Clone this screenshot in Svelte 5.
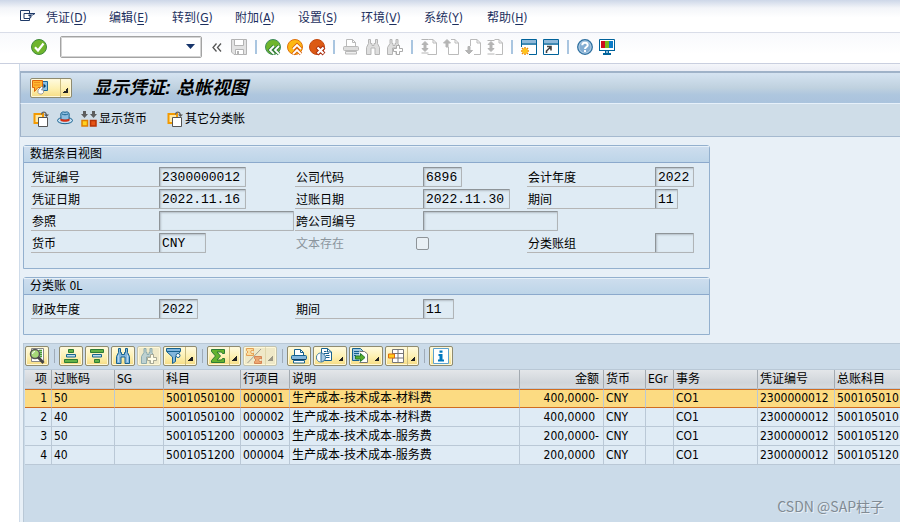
<script>
  const icons = {
    menu: '<path d="M9.5 3V.5H.5v10h9V9M4 3.5h11l-2.500 1.500H8.500M4 3.500v5h6l1-1.500M8.500 5.500h2.500v1.500H9" fill="none" stroke="#1f3a68"/>',
    ok: '<circle cx="8" cy="8" r="7.500" fill="#6fb52c" stroke="#3f8a3c"/><path d="M4 8.200l3 3.300L12.500 4.500" fill="none" stroke="#fff" stroke-width="2.200"/>',
    save: '<path d="M.5.5h15v15H3L.5 13z" fill="#e2e2e2" stroke="#b3b3b3"/><path d="M3.500.5h9v6h-9zM4.500 10.500h8v5h-8z" fill="#fff" stroke="#b3b3b3"/><path d="M6 12h2v3H6z" fill="#b3b3b3"/>',
    back: '<circle cx="8" cy="8" r="7.500" fill="#6fb52c" stroke="#3f8a5c"/><path d="M9 7L5 11l4 4M14 7l-4 4 4 4" fill="none" stroke="#2f7a3a" stroke-width="3.400"/><path d="M9 7L5 11l4 4M14 7l-4 4 4 4" fill="none" stroke="#fff" stroke-width="1.800"/>',
    exit: '<circle cx="8" cy="8" r="7.500" fill="#fdb813" stroke="#e0700c"/><path d="M6 10l4-4 4 4M6 15l4-4 4 4" fill="none" stroke="#d9600a" stroke-width="3.400"/><path d="M6 10l4-4 4 4M6 15l4-4 4 4" fill="none" stroke="#fff" stroke-width="1.800"/>',
    cancel: '<circle cx="8" cy="8" r="7.500" fill="#dc5a14" stroke="#c4480e"/><path d="M8 8l7 7m0-7l-7 7" stroke="#a92c10" stroke-width="4"/><path d="M8.500 8.500l6 6m0-6l-6 6" stroke="#fff" stroke-width="2.200"/>',
    printOff: '<path d="M3.500 7V.5h6l3 3V7" fill="#fff" stroke="#b9b9b9"/><path d="M9.500.5v3h3" fill="none" stroke="#b9b9b9"/><rect x=".5" y="7.500" width="15" height="4" rx="1" fill="#ddd" stroke="#b9b9b9"/><path d="M2.500 12.500h11v2.500h-11z" fill="#eee" stroke="#b9b9b9"/>',
    findOff: '<path d="M3.500.5h2v4H7v2h2v-2h1.500v-4h2v4l2 4v7H10V9H6v6.500H1.500v-7l2-4z" fill="#dedede" stroke="#b5b5b5"/>',
    nextOff: '<path d="M3 .5h2v4h1v2h2v-2h1v-4h2v4l1.500 3v8H9V9H5.500v6.500H.5v-7l2.500-4z" fill="#dedede" stroke="#b5b5b5"/><path d="M9.500 6.500h3v3h3v3h-3v3h-3v-3h-3v-3h3z" fill="#fff" stroke="#aaa"/>',
    pageFirst: '<path d="M7.500.5H12L15.500 4v11.500h-9M12 .5V4h3.500" fill="#fff" stroke="#bbb"/><path d="M.5.5h7M4 2.500L1 5.500h2v4H1l3 3 3-3H5v-4h2zM.5 14h7" fill="#b4b4b4" stroke="#b4b4b4"/>',
    pageUp: '<path d="M5.500 8v7.500h10V4L12 .5H8M12 .5V4h3.500" fill="#fff" stroke="#bbb"/><path d="M4 .5L.5 4H3v4h2V4h2.500z" fill="#b4b4b4" stroke="#b4b4b4"/>',
    pageDown: '<path d="M5.500 7V.5H12L15.500 4v11.500H9M12 .5V4h3.500" fill="#fff" stroke="#bbb"/><path d="M4 15L.5 11.500H3v-4h2v4h2.500z" fill="#b4b4b4" stroke="#b4b4b4"/>',
    pageLast: '<path d="M7.500.5H12L15.500 4v11.500h-7M12 .5V4h3.500" fill="#fff" stroke="#bbb"/><path d="M.5 1.500h7M4 2.500L1 5.500h2v4H1l3 3 3-3H5v-4h2zM.5 15h7" fill="#b4b4b4" stroke="#b4b4b4"/>',
    session: '<path d="M.5.500h15v15H.5z" fill="#fff" stroke="#00629a"/><path d="M1 1h14v3H1z" fill="#8fb9da"/><path d="M.5 5h15" stroke="#00629a" stroke-width="1.500"/><path d="M0 8h8v8H0z" fill="#fff"/><path d="M4 8v8M0 12h8M1 9l6 6m0-6l-6 6" stroke="#f08a00" stroke-width="1.500"/><circle cx="4" cy="12" r="2.500" fill="#ffc61a"/>',
    shortcut: '<path d="M.5.500h15v15H.5z" fill="#fff" stroke="#00629a"/><path d="M1 1h14v3H1z" fill="#8fb9da"/><path d="M.5 5h15" stroke="#00629a" stroke-width="1.500"/><path d="M3.500 14v-2l4-4M4 7.500h4v4" fill="none" stroke="#444" stroke-width="1.600"/>',
    help: '<circle cx="8" cy="8" r="7.300" fill="#83add2" stroke="#2f709f" stroke-width="1.300"/><circle cx="8" cy="8" r="6" fill="none" stroke="#b9d3e8" stroke-width=".8"/><path d="M5.300 6.200c0-3.300 5.400-3.300 5.400 0C10.700 8 8 8 8 10" fill="none" stroke="#fff" stroke-width="2"/><path d="M7 11h2v2H7z" fill="#fff"/>',
    monitor: '<path d="M.5.500h15v11H.5z" fill="#fff" stroke="#00629a"/><path d="M2 2h4v7H2z" fill="#cf0a1c"/><path d="M6 2h4v7H6z" fill="#79b61d"/><path d="M10 2h4v7h-4z" fill="#0b7bc8"/><path d="M0 11.500h16" stroke="#00629a"/><path d="M6 12h4v2h2v2H4v-2h2z" fill="#00629a"/><path d="M7 12h2v2H7z" fill="#8fb9da"/>',
    services: '<path d="M8.500 1.500h7v9h-7z" fill="#8fc2e6" stroke="#1c6a9c"/><path d="M11.500 3.500v5L14 6z" fill="#063d60"/><path d="M.5.500h10v7H6L2.500 11.500v-4h-2z" fill="#ffb62e" stroke="#dc650c"/><path d="M2.500 2.500h6M2.500 5h6" stroke="#dc650c" stroke-width="1.200" stroke-dasharray="1 1"/><path d="M6 12.500V10L9.500 6.500l1.500 1-1.500 2.500h2v2.500L10 14H7.500z" fill="#fff" stroke="#888" stroke-width=".8"/>',
    copy: '<path d="M1.500 3h8.500v9H1.500z" fill="#ffe9a6" stroke="#f39a00" stroke-width="2"/><path d="M5.500 6.500h9v9h-9z" fill="#fff" stroke="#555"/><path d="M8.500 3.500C9 .5 12.500 0 13.500 4" fill="none" stroke="#666" stroke-width="1.400"/><path d="M11 3.500h5L13.500 6z" fill="#555"/>',
    hat: '<ellipse cx="8" cy="9.500" rx="7.500" ry="3.200" fill="#c4def1" stroke="#17628f"/><path d="M4 8.500L3.800 3C4 .8 6.500.5 8 1.300c1.500-.8 4-.5 4.200 1.700L12 8.500c-2 1-6 1-8 0z" fill="#8dbde0" stroke="#17628f"/><path d="M5 3c2 1 4 1 6 0" fill="none" stroke="#17628f"/><path d="M3.500 7.500c2 1.300 7 1.300 9 0v2.200c-2 1.400-7 1.400-9 0z" fill="#d62e12"/>',
    currency: '<path d="M2 0h3v3h2L3.500 7 0 3h2zM11 0h3v3h2l-3.500 4L9 3h2z" fill="#5d5d5d"/><path d="M1 9.500h5.500v5.500H1z" fill="#ffd21f" stroke="#e08000" stroke-width="1.500"/><path d="M9.500 9.500H15v5.500H9.500z" fill="#e55314" stroke="#b63205" stroke-width="1.500"/>',
    details: '<path d="M2.500.5h12v13h-12z" fill="#fff" stroke="#888"/><path d="M10 2.500h3M11 4.500h2M11 6.500h2M11 8.500h2" stroke="#4a9c35" stroke-width="1.400"/><circle cx="6" cy="6" r="4.500" fill="#a6d878" stroke="#555" stroke-width="1.500"/><path d="M3.500 6a2.500 2.500 0 012.500-2.500" fill="none" stroke="#fff"/><path d="M9 9l5.500 6" stroke="#444" stroke-width="2.800"/>',
    sortAsc: '<path d="M5.500 1.500h5v3h-5z" fill="#63b246" stroke="#2c7b35"/><path d="M3.500 6.500h9v2.500h-9z" fill="#b9dced" stroke="#19658f"/><path d="M1.500 11.500h13v3h-13z" fill="#63b246" stroke="#2c7b35"/>',
    sortDesc: '<path d="M1.500 1.500h13v3h-13z" fill="#63b246" stroke="#2c7b35"/><path d="M3.500 6.500h9v2.500h-9z" fill="#b9dced" stroke="#19658f"/><path d="M5.500 11.500h5v3h-5z" fill="#63b246" stroke="#2c7b35"/>',
    find: '<path d="M3.500.5h2v4h1v2h3v-2h1v-4h2v4l2 4v7H10V9H6v6.500H1.500v-7l2-4z" fill="#82b6dc" stroke="#17628f"/><path d="M3.500 7v7M12.500 7v7" stroke="#b7d6ed"/>',
    next: '<g opacity=".45"><path d="M3 .5h2v4h1v2h2v-2h1v-4h2v4l1.500 3v8H9V9H5.500v6.500H.5v-7l2.500-4z" fill="#82b6dc" stroke="#17628f"/></g><path d="M9.500 6.500h3v3h3v3h-3v3h-3v-3h-3v-3h3z" fill="#fffde8" stroke="#a9a995"/>',
    filter: '<path d="M.5.5h14v3L9.500 9v4.500l-3 2V9l-6-5.500z" fill="#82b6dc" stroke="#17628f"/><path d="M1 3.500h13" stroke="#17628f"/><circle cx="12" cy="7.500" r="2" fill="#fff" stroke="#17628f"/>',
    sum: '<path d="M1.500 1.500h13v4h-2l-1-1.500H7l3.500 4L7 12h4.500l1-1.500h2v4h-13v-2L5.500 8l-4-4.500z" fill="#65b32e" stroke="#2c7b35"/>',
    subtotal: '<g opacity=".65"><path d="M1.500 15L15 1" stroke="#777"/><path d="M.5.5h7V3L6 2 4.500 4 6 6l1.500-1v2.500h-7V5.500L2 4 .5 2.500z" fill="#ffd78a" stroke="#e17a19"/><path d="M8.500 8.500h7V11L14 10l-1.500 2L14 14l1.500-1v2.500h-7v-2L10 12l-1.500-1.500z" fill="#ea8545" stroke="#c95018"/></g>',
    print: '<path d="M3.500 7V1.500h6l3 3V7" fill="#fff" stroke="#17628f"/><path d="M9.500 1.500v3h3" fill="none" stroke="#17628f"/><rect x=".5" y="7.500" width="15" height="4" rx="1" fill="#82b6dc" stroke="#17628f"/><path d="M1 11.500h14" stroke="#123f63"/><path d="M2.500 12.500h11V15h-11z" fill="#fff" stroke="#17628f"/>',
    view: '<path d="M5.500.5h6l4 3.500v8.500h-10z" fill="#fff" stroke="#17628f"/><path d="M8 3.500h2.500M8 5.500h5M10 7.500h3.500M10 9.500h3.500M11.500.5V4h4" fill="none" stroke="#17628f"/><circle cx="5" cy="9.500" r="4.500" fill="#a9cbe3" stroke="#33729b"/><path d="M5 9.500V5.500a4 4 0 000 8z" fill="#fff"/><path d="M5 5.500v8" stroke="#33729b"/>',
    export: '<path d="M.5.500h8l2 2v10H.5z" fill="#9fc8e2" stroke="#17628f"/><path d="M2 3.500h5M2 5.500h5M2 7.500h2" stroke="#17628f"/><path d="M7.500 3.500h5L15.500 6v8.500h-8" fill="#fff" stroke="#777"/><path d="M3.500 8h5V5.500L13 9.500l-4.500 4V11h-5z" fill="#58ad2b" stroke="#277c2f"/>',
    layout: '<path d="M4.500 1.500h11v13h-11zM4.500 5.500h11M4.500 10h11M10 1.500v13" fill="#fff" stroke="#777"/><path d="M.5 6h6v4h-6z" fill="#ffcf20" stroke="#e06b10"/>',
    info: '<path d="M.5.5h15v15H.5z" fill="#fff" stroke="#5ba2d0"/><path d="M6.500 2.500h3v2.200h-3zM5.500 6h4v5.500H11V13.500H5v-2h1.500V8h-1z" fill="#0078bd"/>'
  };

  const menus = [
    ['凭证', 'D'], ['编辑', 'E'], ['转到', 'G'], ['附加', 'A'],
    ['设置', 'S'], ['环境', 'V'], ['系统', 'Y'], ['帮助', 'H']
  ];

  const systemTools = [
    { icon: 'save', name: '保存', off: true }, null,
    { icon: 'back', name: '返回' }, { icon: 'exit', name: '退出' }, { icon: 'cancel', name: '取消' }, null,
    { icon: 'printOff', name: '打印', off: true }, { icon: 'findOff', name: '查找', off: true }, { icon: 'nextOff', name: '查找下一个', off: true }, null,
    { icon: 'pageFirst', name: '首页', off: true }, { icon: 'pageUp', name: '上一页', off: true },
    { icon: 'pageDown', name: '下一页', off: true }, { icon: 'pageLast', name: '末页', off: true }, null,
    { icon: 'session', name: '新建会话' }, { icon: 'shortcut', name: '创建快捷方式' }, null,
    { icon: 'help', name: '帮助' }, { icon: 'monitor', name: '定制本地布局' }
  ];

  const gridTools = [
    { icon: 'details', name: '明细' }, null,
    { icon: 'sortAsc', name: '升序' }, { icon: 'sortDesc', name: '降序' },
    { icon: 'find', name: '查找' }, { icon: 'next', name: '查找下一个', off: true },
    { icon: 'filter', name: '过滤器', drop: true, split: true }, null,
    { icon: 'sum', name: '总计', drop: true, split: true },
    { icon: 'subtotal', name: '小计', drop: true, split: true, off: true }, null,
    { icon: 'print', name: '打印' }, { icon: 'view', name: '视图', drop: true },
    { icon: 'export', name: '导出', drop: true }, { icon: 'layout', name: '布局', drop: true, split: true }, null,
    { icon: 'info', name: '信息' }
  ];

  const entryFields = [
    { id: 'doc', label: '凭证编号', value: '2300000012', size: 'w87' },
    { id: 'company', label: '公司代码', value: '6896', size: 'w39' },
    { id: 'year', label: '会计年度', value: '2022', size: 'w39' },
    { id: 'docdate', label: '凭证日期', value: '2022.11.16', size: 'w87' },
    { id: 'postdate', label: '过账日期', value: '2022.11.30', size: 'w87' },
    { id: 'period', label: '期间', value: '11', size: 'w23' },
    { id: 'ref', label: '参照', value: '', size: 'w135' },
    { id: 'cross', label: '跨公司编号', value: '', size: 'w135' },
    null,
    { id: 'currency', label: '货币', value: 'CNY', size: 'w47' },
    { id: 'text', label: '文本存在', check: true },
    { id: 'group', label: '分类账组', value: '', size: 'w39' }
  ];

  const ledgerFields = [
    { id: 'fiscal', label: '财政年度', value: '2022', size: 'w39' },
    { id: 'lperiod', label: '期间', value: '11', size: 'w31' }
  ];

  const columns = [
    ['项', 27, 'num'], ['过账码', 63], ['SG', 49], ['科目', 77], ['行项目', 49], ['说明', 230],
    ['金额', 84, 'num'], ['货币', 42], ['EGr', 28], ['事务', 84], ['凭证编号', 77], ['总账科目', 84]
  ];

  const rows = [
    ['1', '50', '', '5001050100', '000001', '生产成本-技术成本-材料费', '400,0000-', 'CNY', '', 'CO1', '2300000012', '500105010'],
    ['2', '40', '', '5001050100', '000002', '生产成本-技术成本-材料费', '400,0000', 'CNY', '', 'CO1', '2300000012', '500105010'],
    ['3', '50', '', '5001051200', '000003', '生产成本-技术成本-服务费', '200,0000-', 'CNY', '', 'CO1', '2300000012', '500105120'],
    ['4', '40', '', '5001051200', '000004', '生产成本-技术成本-服务费', '200,0000', 'CNY', '', 'CO1', '2300000012', '500105120']
  ];

  let selected = $state(0);
</script>

{#snippet icon(name)}
  <svg class="icon" viewBox="0 0 16 16" aria-hidden="true">{@html icons[name]}</svg>
{/snippet}

{#snippet field(f)}
  {#if !f}
    <div></div>
  {:else if f.check}
    <div class="field">
      <label class="plain" for={f.id}>{f.label}</label>
      <input class="check" type="checkbox" id={f.id} disabled />
    </div>
  {:else}
    <div class="field">
      <label for={f.id}>{f.label}</label>
      <input class={['value', f.size]} id={f.id} value={f.value} readonly />
    </div>
  {/if}
{/snippet}

<div class="page">
  <nav class="menubar">
    {@render icon('menu')}
    {#each menus as [text, key]}
      <button class="menu">{text}(<u>{key}</u>)</button>
    {/each}
  </nav>

  <div class="systembar">
    <button class="tool" aria-label="确认">{@render icon('ok')}</button>
    <div class="command">
      <select aria-label="命令"><option></option></select>
      <svg class="caret" viewBox="0 0 9 5" aria-hidden="true"><path d="M0 0h9L4.500 5z" fill="#17356b" /></svg>
    </div>
    <button class="collapse" aria-label="收起">
      <svg viewBox="0 0 10 9" aria-hidden="true"><path d="M4.500.5L1 4.500l3.500 4M9 .500L5.500 4.500l3.500 4" fill="none" stroke="#555" stroke-width="1.300" /></svg>
    </button>
    {#each systemTools as t}
      {#if t}
        <button class="tool" aria-label={t.name} disabled={t.off}>{@render icon(t.icon)}</button>
      {:else}
        <span class="sep blue"></span>
      {/if}
    {/each}
  </div>

  <main>
    <header>
      <button class="gold drop" aria-label="服务">
        {@render icon('services')}
        <span class="arrow split"></span>
      </button>
      <h1>显示凭证: 总帐视图</h1>
    </header>

    <div class="appbar">
      <button class="action" aria-label="其它凭证">{@render icon('copy')}</button>
      <button class="action" aria-label="抬头">{@render icon('hat')}</button>
      <button class="action">{@render icon('currency')}显示货币</button>
      <button class="action far">{@render icon('copy')}其它分类帐</button>
    </div>

    <div class="content">
      <section class="box">
        <h2>数据条目视图</h2>
        <div class="form">
          {#each entryFields as f}{@render field(f)}{/each}
        </div>
      </section>

      <section class="box">
        <h2>分类账 0L</h2>
        <div class="form">
          {#each ledgerFields as f}{@render field(f)}{/each}
        </div>
      </section>

      <section class="grid">
        <div class="gridbar">
          {#each gridTools as t}
            {#if t}
              <button class={['gold', t.drop && 'drop', t.off && 'off']} aria-label={t.name} disabled={t.off}>
                {@render icon(t.icon)}
                {#if t.drop}<span class={['arrow', t.split && 'split']}></span>{/if}
              </button>
            {:else}
              <span class="sep"></span>
            {/if}
          {/each}
        </div>
        <div class="scroll">
          <table>
            <colgroup>
              {#each columns as [, width]}<col style:width="{width}px" />{/each}
            </colgroup>
            <thead>
              <tr>{#each columns as [title, , kind]}<th class={kind}>{title}</th>{/each}</tr>
            </thead>
            <tbody>
              {#each rows as row, r}
                <tr class={{ selected: r === selected }} onclick={() => (selected = r)}>
                  {#each row as cell, c}
                    <td class={[columns[c][2], c === 6 && !cell.endsWith('-') && 'plus']}>{cell}</td>
                  {/each}
                </tr>
              {/each}
            </tbody>
          </table>
        </div>
      </section>
    </div>
  </main>
  <div class="watermark">CSDN @SAP柱子</div>
</div>

<style>
  :global(body) {
    margin: 0;
  }
  .page {
    position: relative;
    display: flex;
    flex-direction: column;
    min-height: 100vh;
    overflow: hidden;
    background: #fff;
    color: #000;
    font: 12px/16px 'DejaVu Sans Condensed', 'Noto Sans CJK SC', sans-serif;
  }
  button {
    margin: 0;
    padding: 0;
    border: 0;
    background: none;
    color: inherit;
    font: inherit;
    white-space: nowrap;
  }
  .icon {
    display: block;
    flex: none;
    width: 16px;
    height: 16px;
    overflow: visible;
  }
  .menubar {
    display: flex;
    align-items: center;
    gap: 21px;
    height: 32px;
    padding: 4px 0 0 20px;
    box-sizing: border-box;
    background: linear-gradient(#cdd7e8, #f3f5f9 25%, #fff 55%);
    color: #1c2f5e;
  }
  .menubar .icon {
    margin-right: -11px;
  }
  .menu {
    min-width: 42px;
    text-align: left;
  }
  .menu u {
    text-underline-offset: 2px;
  }
  .systembar {
    display: flex;
    align-items: center;
    gap: 6px;
    height: 32px;
    padding: 0 0 2px 31px;
    box-sizing: border-box;
    border-top: 1px solid #d9dde8;
    border-bottom: 1px solid #c9cfdf;
    background: linear-gradient(#f8f9fc, #fff 70%);
  }
  .command {
    position: relative;
    width: 142px;
    height: 22px;
    margin-left: 7px;
  }
  .command select {
    appearance: none;
    display: block;
    width: 100%;
    height: 100%;
    border: 1px solid #a3a3a3;
    border-radius: 2px;
    outline: 1px solid #d4d4d4;
    outline-offset: -2px;
    background: #fff;
  }
  .caret {
    position: absolute;
    top: 8px;
    right: 7px;
    width: 9px;
    height: 5px;
  }
  .collapse {
    width: 17px;
    padding-left: 4px;
  }
  .collapse svg {
    display: block;
    width: 10px;
    height: 9px;
  }
  .sep {
    flex: none;
    width: 6px;
    height: 14px;
    background: linear-gradient(#9fabb8, #9fabb8) center / 1px 100% no-repeat;
  }
  .sep.blue {
    background: linear-gradient(#a9c5e0, #a9c5e0) center / 2px 100% no-repeat;
  }
  main {
    display: flex;
    flex: 1;
    flex-direction: column;
    margin-left: 19px;
    border-left: 1px solid #cfdcea;
    background: linear-gradient(#f4f6fa, #e8ebf4) 0 0 / 100% 8px no-repeat #e8f0f7;
    padding-top: 7px;
  }
  header {
    display: flex;
    align-items: center;
    gap: 21px;
    height: 32px;
    padding: 0 0 1px 9px;
    box-sizing: border-box;
    border-top: 2px solid #9fb2c8;
    border-left: 1px solid #9fb2c8;
    background: linear-gradient(#d5e3f1, #bfd1df 50%, #aec6de 72%, #aac3dd);
  }
  h1 {
    margin: 0;
    font: italic bold 18px/24px 'Liberation Sans', 'Noto Sans CJK SC', sans-serif;
  }
  .appbar {
    display: flex;
    align-items: center;
    gap: 8px;
    height: 34px;
    padding: 0 0 2px 12px;
    box-sizing: border-box;
    border-top: 1px solid #e6f0fa;
    border-bottom: 1px solid #a5b9cf;
    border-left: 1px solid #9fb2c8;
    background: #cfdde8;
  }
  .action {
    display: flex;
    align-items: center;
    gap: 2px;
  }
  .far {
    margin-left: 12px;
  }
  .content {
    display: flex;
    flex: 1;
    flex-direction: column;
    gap: 8px;
    padding: 8px 0 0 3px;
  }
  .box {
    max-width: 687px;
    box-sizing: border-box;
    border: 1px solid #93b0ce;
    border-radius: 3px 3px 0 0;
    background: #dfebf4;
  }
  h2 {
    margin: 0;
    padding-left: 6px;
    border-bottom: 1px solid #8ba9cc;
    border-top: 1px solid #e6f0f8;
    background: linear-gradient(#cdddee, #bdd5e8);
    font: inherit;
    line-height: 15px;
  }
  .form {
    display: grid;
    grid-template-columns: 264px 232px 1fr;
    row-gap: 2px;
    padding: 4px 0 15px 7px;
  }
  .field {
    display: flex;
    align-items: center;
    height: 20px;
  }
  label {
    flex: none;
    width: 128px;
    height: 20px;
    box-sizing: border-box;
    padding: 2px 0 0 1px;
    border-bottom: 1px solid #b5b5b5;
    line-height: 18px;
  }
  label.plain {
    width: 121px;
    border-bottom-color: transparent;
    color: #8b959d;
  }
  .value {
    flex: none;
    height: 20px;
    margin: 0;
    padding: 0 0 0 2px;
    box-sizing: border-box;
    border: 1px solid #b0b4b7;
    border-top-color: #8e9498;
    border-left-color: #8e9498;
    border-radius: 1px;
    outline: none;
    background: #dfebf4;
    box-shadow: inset 1px 1px 2px #b3bdc5;
    color: #000;
    font: 13px/18px 'Liberation Mono', monospace;
  }
  .w23 {
    width: 23px;
  }
  .w31 {
    width: 31px;
  }
  .w39 {
    width: 39px;
  }
  .w47 {
    width: 47px;
  }
  .w87 {
    width: 87px;
  }
  .w135 {
    width: 135px;
  }
  .check {
    appearance: none;
    width: 13px;
    height: 13px;
    margin: 0;
    border: 1px solid #8e9498;
    border-radius: 2px;
    background: #e9f0f5;
  }
  .grid {
    flex: 1;
    border-top: 1px solid #b9c8d6;
    border-left: 1px solid #b9c8d6;
    background: #cbdbe9;
  }
  .gridbar {
    display: flex;
    align-items: center;
    gap: 2px;
    padding: 2px 0 3px 1px;
  }
  .gold {
    display: flex;
    align-items: center;
    width: 24px;
    height: 20px;
    padding-left: 3px;
    box-sizing: border-box;
    border: 1px solid #8f8b70;
    border-radius: 2px;
    background: linear-gradient(#fffbe0, #fdf0b0 55%, #f6dc84);
    box-shadow: inset 0 0 0 1px #fff8d8;
  }
  .gold.drop {
    width: 34px;
    padding-left: 2px;
  }
  header .gold.drop {
    width: 42px;
    padding-left: 1px;
  }
  .gold.off {
    border-color: #c2c3b0;
    background: #efe9c8;
  }
  .arrow {
    flex: 1;
    height: 18px;
    margin-left: 3px;
    background: linear-gradient(135deg, transparent 50%, #222 50%) right 3px bottom 4px / 5px 5px no-repeat;
  }
  .arrow.split {
    border-left: 1px solid #c9bb80;
  }
  header .arrow {
    margin-left: 12px;
  }
  .off .arrow {
    opacity: 0.4;
  }
  .scroll {
    overflow: hidden;
    border-top: 1px solid #b9c8d6;
  }
  table {
    width: 894px;
    margin-left: 1px;
    table-layout: fixed;
    border-spacing: 0;
  }
  th,
  td {
    height: 19px;
    box-sizing: border-box;
    padding: 0 1px 0 2px;
    overflow: hidden;
    border-right: 1px solid #bac8d6;
    border-bottom: 1px solid #bac8d6;
    line-height: 18px;
    text-align: left;
    white-space: nowrap;
  }
  th {
    border-right-color: #a3aab1;
    background: linear-gradient(#e3e6e9, #d0d5da 70%, #d8dbde);
    font-weight: normal;
  }
  td {
    background: #dfebf5;
  }
  .num {
    padding-right: 4px;
    text-align: right;
  }
  .plus {
    padding-right: 8px;
  }
  .selected td {
    border-top: 1px solid #d06c20;
    border-bottom-color: #d06c20;
    background: #fcdb82;
    line-height: 17px;
  }
  .watermark {
    position: absolute;
    right: 16px;
    bottom: 6px;
    color: #818b94;
    font: 14px/20px 'Noto Sans CJK SC', sans-serif;
    text-shadow: 1px 1px 0 #e8eff5;
  }
</style>
